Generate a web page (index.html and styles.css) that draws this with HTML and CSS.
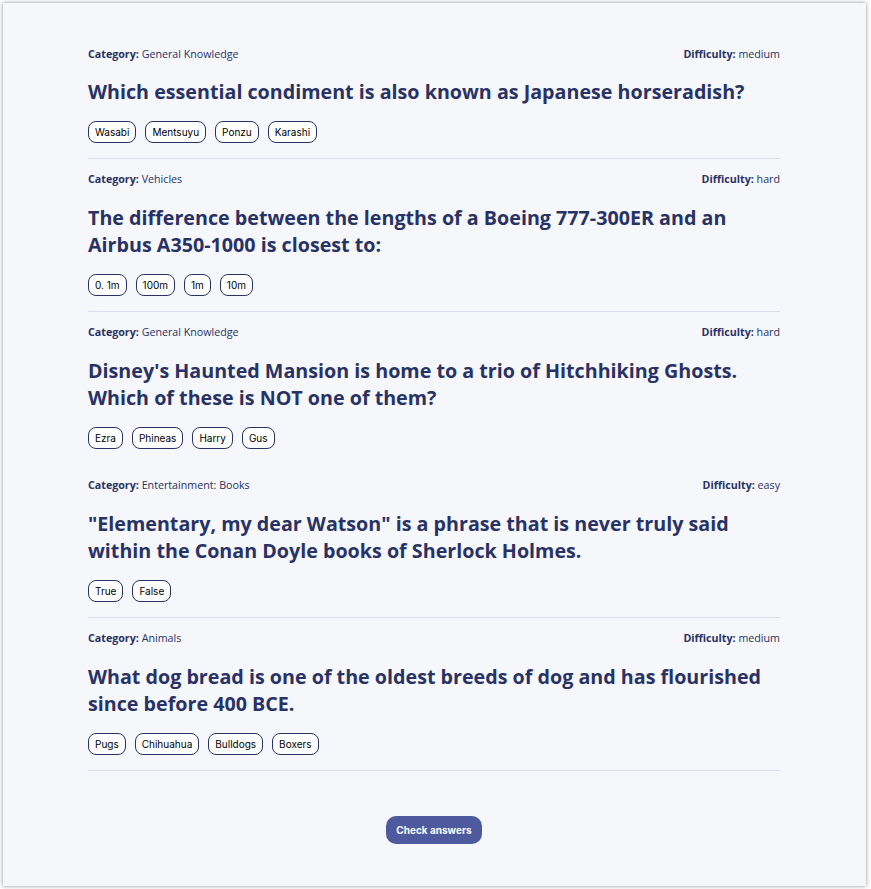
FILE: index.html
```html
<!DOCTYPE html>
<html lang="en">
<head>
<meta charset="utf-8">
<title>Quizzical</title>
<link rel="stylesheet" href="styles.css">
</head>
<body>
<main class="quiz">
  <section class="question">
    <div class="meta"><span><b>Category:</b> General Knowledge</span><span><b>Difficulty:</b> medium</span></div>
    <h2 class="q-text">Which essential condiment is also known as Japanese horseradish?</h2>
    <div class="answers"><span class="pill">Wasabi</span><span class="pill">Mentsuyu</span><span class="pill">Ponzu</span><span class="pill">Karashi</span></div>
  </section>
  <section class="question">
    <div class="meta"><span><b>Category:</b> Vehicles</span><span><b>Difficulty:</b> hard</span></div>
    <h2 class="q-text">The difference between the lengths of a Boeing 777-300ER and an Airbus A350-1000 is closest to:</h2>
    <div class="answers"><span class="pill">0. 1m</span><span class="pill">100m</span><span class="pill">1m</span><span class="pill">10m</span></div>
  </section>
  <section class="question no-line">
    <div class="meta"><span><b>Category:</b> General Knowledge</span><span><b>Difficulty:</b> hard</span></div>
    <h2 class="q-text">Disney's Haunted Mansion is home to a trio of Hitchhiking Ghosts. Which of these is NOT one of them?</h2>
    <div class="answers"><span class="pill">Ezra</span><span class="pill">Phineas</span><span class="pill">Harry</span><span class="pill">Gus</span></div>
  </section>
  <section class="question">
    <div class="meta"><span><b>Category:</b> Entertainment: Books</span><span><b>Difficulty:</b> easy</span></div>
    <h2 class="q-text">"Elementary, my dear Watson" is a phrase that is never truly said within the Conan Doyle books of Sherlock Holmes.</h2>
    <div class="answers"><span class="pill">True</span><span class="pill">False</span></div>
  </section>
  <section class="question">
    <div class="meta"><span><b>Category:</b> Animals</span><span><b>Difficulty:</b> medium</span></div>
    <h2 class="q-text">What dog bread is one of the oldest breeds of dog and has flourished since before 400 BCE.</h2>
    <div class="answers"><span class="pill">Pugs</span><span class="pill">Chihuahua</span><span class="pill">Bulldogs</span><span class="pill">Boxers</span></div>
  </section>
  <div class="actions"><button class="check">Check answers</button></div>
</main>
</body>
</html>
```
FILE: styles.css
```css
* { box-sizing: border-box; }
html, body { margin: 0; padding: 0; }
body {
  background: #ffffff;
  padding: 3px 5px 3px 3px;
  font-family: "Open Sans", "Lato", sans-serif;
  color: #293264;
}
.quiz {
  background: #f5f7fb;
  box-shadow: 0 0 4px rgba(0, 0, 0, 0.45);
  min-height: 883px;
  padding: 45px 86px 41px 85px;
}
.question {
  border-bottom: 1px solid #dbdef0;
  padding-bottom: 15px;
  margin-bottom: 14px;
}
.question.no-line { border-bottom-color: transparent; }
.meta {
  display: flex;
  justify-content: space-between;
  font-size: 10.7px;
  line-height: 12px;
}
.meta b { font-weight: 700; }
.q-text {
  margin: 18px 0 16px;
  font-size: 19.7px;
  line-height: 27px;
  font-weight: 700;
}
.question + .question .q-text { margin-top: 19px; }
.answers {
  display: flex;
  gap: 9px;
}
.pill {
  border: 1px solid #293264;
  border-radius: 8px;
  height: 22px;
  padding: 0 6px;
  font-family: "Inter", sans-serif;
  font-size: 10px;
  line-height: 20px;
  color: #000;
  background: #fff;
}
.actions {
  display: flex;
  justify-content: center;
  margin-top: 45px;
}
.check {
  background: #4d5b9e;
  color: #fff;
  border: 0;
  border-radius: 10px;
  width: 96px;
  height: 28px;
  font-family: "Inter", sans-serif;
  font-weight: 700;
  font-size: 10px;
}
```
